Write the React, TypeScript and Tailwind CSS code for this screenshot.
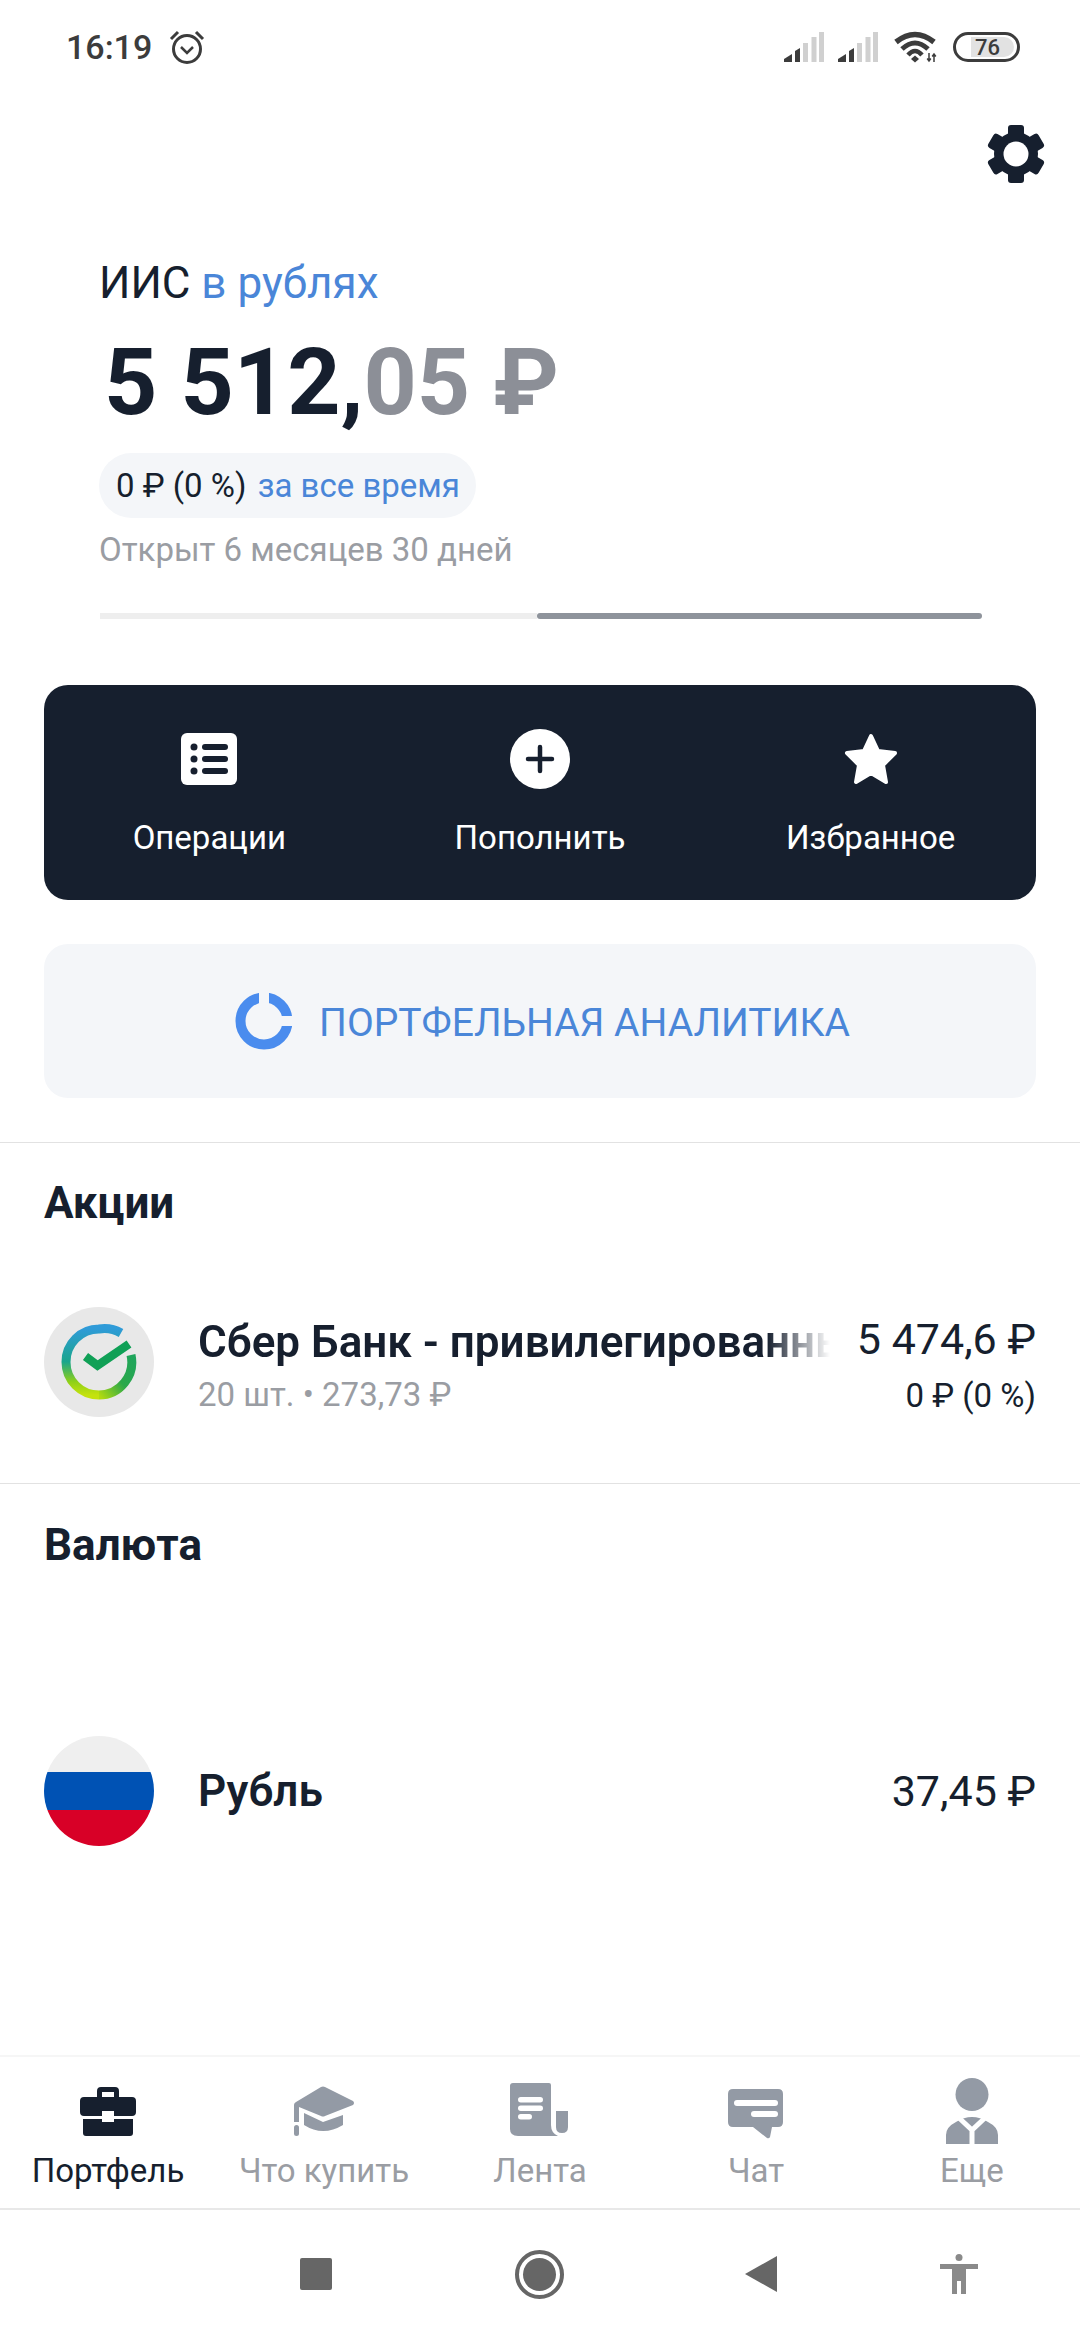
import React from 'react';

const FONT = { fontFamily: 'Roboto, "Liberation Sans", sans-serif' };

function SignalIcon() {
  return (
    <svg width="40" height="30" viewBox="0 0 40 30">
      <path d="M0 27 L8 22 V30 H0 Z" fill="#3c3c3c" />
      <path d="M11 19 L16 16 V30 H11 Z" fill="#3c3c3c" />
      <rect x="19" y="11" width="5" height="19" fill="#d0d0d0" />
      <rect x="27.5" y="5" width="5" height="25" fill="#d0d0d0" />
      <rect x="35" y="0" width="5" height="30" fill="#d0d0d0" />
    </svg>
  );
}

function WifiIcon() {
  return (
    <svg width="44" height="32" viewBox="0 0 44 32" fill="none">
      <path d="M2 11 Q21 -4 40 11" stroke="#3c3c3c" strokeWidth="5.5" />
      <path d="M8 18 Q21 6 34 18" stroke="#3c3c3c" strokeWidth="5" />
      <path d="M14 24 Q21 16 28 24" stroke="#3c3c3c" strokeWidth="4.5" />
      <path d="M21 24.5 L25 28 L21 31.5 L17 28 Z" fill="#3c3c3c" />
      <path d="M35 22 V30 M33.2 27.5 L35 30 L36.8 27.5" stroke="#3c3c3c" strokeWidth="1.5" />
      <path d="M40 31 V23 M38.2 25.5 L40 23 L41.8 25.5" stroke="#3c3c3c" strokeWidth="1.5" />
    </svg>
  );
}

function GearIcon() {
  return (
    <svg width="58" height="58" viewBox="0 0 58 58" fill="#161f2e">
      <circle cx="29" cy="29" r="22" />
      <rect x="21" y="0" width="16" height="58" rx="3" />
      <rect x="21" y="0" width="16" height="58" rx="3" transform="rotate(60 29 29)" />
      <rect x="21" y="0" width="16" height="58" rx="3" transform="rotate(120 29 29)" />
      <circle cx="29" cy="29" r="12.5" fill="#ffffff" />
    </svg>
  );
}

function ListIcon() {
  return (
    <svg width="56" height="52" viewBox="0 0 56 52">
      <rect width="56" height="52" rx="6" fill="#ffffff" />
      <circle cx="13" cy="14" r="3.5" fill="#161f2e" />
      <circle cx="13" cy="26" r="3.5" fill="#161f2e" />
      <circle cx="13" cy="38" r="3.5" fill="#161f2e" />
      <rect x="21" y="11" width="26" height="6" rx="3" fill="#161f2e" />
      <rect x="21" y="23" width="26" height="6" rx="3" fill="#161f2e" />
      <rect x="21" y="35" width="26" height="6" rx="3" fill="#161f2e" />
    </svg>
  );
}

function PlusIcon() {
  return (
    <svg width="60" height="60" viewBox="0 0 60 60">
      <circle cx="30" cy="30" r="30" fill="#ffffff" />
      <path d="M30 18 V42 M18 30 H42" stroke="#161f2e" strokeWidth="4.5" strokeLinecap="round" />
    </svg>
  );
}

function StarIcon() {
  return (
    <svg width="56" height="52" viewBox="0 0 56 52">
      <path
        d="M28 3 L35 18 L52 20 L40 32 L43 49 L28 40 L13 49 L16 32 L4 20 L21 18 Z"
        fill="#ffffff"
        stroke="#ffffff"
        strokeWidth="4"
        strokeLinejoin="round"
      />
    </svg>
  );
}

function DonutIcon() {
  return (
    <svg width="58" height="58" viewBox="0 0 58 58" fill="none">
      <circle cx="29" cy="29" r="23.5" stroke="#4a8cee" strokeWidth="10" />
      <rect x="24" y="0" width="10" height="18" fill="#f4f6f9" />
      <rect x="42" y="24" width="16" height="10" fill="#f4f6f9" />
    </svg>
  );
}

function SberIcon() {
  return (
    <div className="flex h-[110px] w-[110px] shrink-0 items-center justify-center rounded-full bg-[#e8e8e8]">
      <svg width="76" height="76" viewBox="0 0 76 76" fill="none">
        <defs>
          <linearGradient id="sber-left" x1="0" y1="0" x2="0" y2="1">
            <stop offset="0" stopColor="#2f9bd8" />
            <stop offset="0.5" stopColor="#19a58c" />
            <stop offset="0.8" stopColor="#8fd018" />
            <stop offset="1" stopColor="#c4e20e" />
          </linearGradient>
          <linearGradient id="sber-right" x1="0" y1="1" x2="1" y2="0">
            <stop offset="0" stopColor="#b0da10" />
            <stop offset="0.5" stopColor="#2ba84a" />
            <stop offset="1" stopColor="#1fa55c" />
          </linearGradient>
        </defs>
        <path d="M60 9 A33 33 0 0 0 38 5 A33 33 0 0 0 38 71" stroke="url(#sber-left)" strokeWidth="9" />
        <path d="M38 71 A33 33 0 0 0 70 31" stroke="url(#sber-right)" strokeWidth="9" />
        <path d="M24.5 32.5 L36.5 41.5 L68 20" stroke="#10a056" strokeWidth="8.5" />
      </svg>
    </div>
  );
}

function FlagIcon() {
  return (
    <div className="flex h-[110px] w-[110px] shrink-0 flex-col overflow-hidden rounded-full">
      <div className="h-[36px] bg-[#efefef]" />
      <div className="h-[38px] bg-[#0052b4]" />
      <div className="h-[36px] bg-[#d80027]" />
    </div>
  );
}

function BriefcaseIcon() {
  return (
    <svg width="72" height="72" viewBox="0 0 72 72" fill="#161f2e">
      <path d="M25 23 V16 Q25 12 29 12 H43 Q47 12 47 16 V23 H42 V17 H30 V23 Z" />
      <path d="M12 22 H60 Q64 22 64 26 V37 Q64 41 60 41 H42 V36 H30 V41 H12 Q8 41 8 37 V26 Q8 22 12 22 Z" />
      <path d="M11 44 H30 V47 H42 V44 H61 V58 Q61 61 58 61 H14 Q11 61 11 58 Z" />
    </svg>
  );
}

function HatIcon() {
  return (
    <svg width="72" height="72" viewBox="0 0 72 72" fill="#939aa5">
      <path d="M33 12 Q35 11 37 12 L65 26 Q67 28 65 30 L37 41 Q35 42 33 41 L11 32 V47 H6 V30 Q6 28 8 27 Z" />
      <path d="M16 38 L35 47 L55 40 V50 Q35 62 16 50 Z" />
      <rect x="6" y="50" width="5" height="11" rx="2.5" />
    </svg>
  );
}

function FeedIcon() {
  return (
    <svg width="72" height="72" viewBox="0 0 72 72">
      <path d="M9 8 H45 Q47 8 47 10 V50 Q47 58 54 61 H14 Q6 61 6 54 V11 Q6 8 9 8 Z" fill="#939aa5" />
      <path d="M52 36 H64 V52 Q64 58 58 58 Q52 58 52 52 Z" fill="#939aa5" />
      <rect x="14" y="22" width="25" height="5.5" rx="2.75" fill="#ffffff" />
      <rect x="14" y="30.5" width="25" height="5.5" rx="2.75" fill="#ffffff" />
      <rect x="14" y="39" width="14" height="5.5" rx="2.75" fill="#ffffff" />
    </svg>
  );
}

function ChatIcon() {
  return (
    <svg width="72" height="72" viewBox="0 0 72 72">
      <path d="M13 14 H58 Q63 14 63 19 V47 Q63 52 58 52 H52 L50 62 Q49 64 47 63 L33 52 H13 Q8 52 8 47 V19 Q8 14 13 14 Z" fill="#939aa5" />
      <rect x="14" y="25" width="44" height="6" rx="3" fill="#ffffff" />
      <rect x="31" y="36" width="27" height="6" rx="3" fill="#ffffff" />
    </svg>
  );
}

function PersonIcon() {
  return (
    <svg width="72" height="72" viewBox="0 0 72 72" fill="none">
      <circle cx="36" cy="19.5" r="16.5" fill="#939aa5" />
      <path d="M10 69 V60 Q10 52 20 47 Q28 42 36 42 Q44 42 52 47 Q62 52 62 60 V69 Z" fill="#939aa5" />
      <path d="M21 41 L36 55 L51 41 M36 55 V69" stroke="#ffffff" strokeWidth="5" />
    </svg>
  );
}

const NAV_ITEMS = [
  { label: 'Портфель', icon: <BriefcaseIcon />, active: true },
  { label: 'Что купить', icon: <HatIcon />, active: false },
  { label: 'Лента', icon: <FeedIcon />, active: false },
  { label: 'Чат', icon: <ChatIcon />, active: false },
  { label: 'Еще', icon: <PersonIcon />, active: false },
];

export default function App() {
  return (
    <div className="flex h-[2340px] w-[1080px] flex-col overflow-hidden bg-white text-[#161f2e]" style={FONT}>
      {/* status bar */}
      <div className="flex h-[94px] shrink-0 items-center justify-between pl-[66px] pr-[60px] text-[#3c3c3c]">
        <div className="flex items-center gap-[17px]">
          <span className="text-[34px] font-medium leading-none">16:19</span>
          <svg width="36" height="34" viewBox="0 0 36 34" fill="none" stroke="#3c3c3c">
            <circle cx="18" cy="19" r="13.5" strokeWidth="3" />
            <path d="M12 17 L18 23 L24 17" strokeWidth="2.5" />
            <path d="M2 9 L9 2 M34 9 L27 2" strokeWidth="3" />
          </svg>
        </div>
        <div className="flex items-center">
          <SignalIcon />
          <div className="ml-[14px]">
            <SignalIcon />
          </div>
          <div className="ml-[16px]">
            <WifiIcon />
          </div>
          <div className="ml-[15px] flex h-[30px] w-[67px] items-center rounded-full border-[3px] border-[#3c3c3c] py-[2px] pr-[3px]">
            <div className="ml-[15px] h-full w-[43px] rounded-r-full bg-[#e2e2e2] pl-[4px] text-[22px] font-medium leading-[22px] text-[#3c3c3c]">
              76
            </div>
          </div>
        </div>
      </div>

      {/* settings */}
      <div className="flex shrink-0 justify-end pb-[7px] pr-[35px] pt-[31px]">
        <GearIcon />
      </div>

      {/* account summary */}
      <div className="mt-[65px] flex shrink-0 flex-col items-start px-[99px]">
        <div className="text-[44px] leading-[56px]">
          ИИС <span className="text-[#4a86d8]">в рублях</span>
        </div>
        <div className="ml-[5px] mt-[17px] text-[93px] font-bold leading-[110px]">
          5 512,<span className="text-[#8c8f97]">05 ₽</span>
        </div>
        <div className="mt-[15px] flex h-[65px] items-center rounded-full bg-[#f4f6f9] pl-[17px] pr-[16px] text-[33px]">
          0 ₽ (0 %)&nbsp;<span className="ml-[3px] text-[#4a86d8]">за все время</span>
        </div>
        <div className="mt-[10px] text-[33px] leading-[44px] text-[#9a9da3]">Открыт 6 месяцев 30 дней</div>
        <div className="ml-px mt-[41px] flex h-[6px] w-[882px]">
          <div className="w-[437px] bg-[#eeeeee]" />
          <div className="flex-1 rounded-full bg-[#8e939b]" />
        </div>
      </div>

      {/* actions */}
      <div className="mx-[44px] mt-[66px] grid h-[215px] shrink-0 grid-cols-3 rounded-[24px] bg-[#161f2e] text-white">
        <div className="flex flex-col items-center pt-[48px]">
          <ListIcon />
          <div className="mt-[33px] text-[33px] leading-[40px]">Операции</div>
        </div>
        <div className="flex flex-col items-center pt-[44px]">
          <PlusIcon />
          <div className="mt-[29px] text-[33px] leading-[40px]">Пополнить</div>
        </div>
        <div className="flex flex-col items-center pt-[48px]">
          <StarIcon />
          <div className="mt-[33px] text-[33px] leading-[40px]">Избранное</div>
        </div>
      </div>

      <div className="mx-[44px] mt-[44px] flex h-[154px] shrink-0 items-center justify-center gap-[26px] rounded-[24px] bg-[#f4f6f9] pl-[5px]">
        <DonutIcon />
        <span className="pt-[4px] text-[39px] text-[#4a86d8]">ПОРТФЕЛЬНАЯ АНАЛИТИКА</span>
      </div>

      <div className="mt-[44px] h-px shrink-0 bg-[#e2e2e2]" />

      {/* stocks */}
      <div className="mt-[30px] shrink-0 px-[44px] text-[44px] font-bold leading-[60px]">Акции</div>
      <div className="mt-[74px] flex h-[110px] shrink-0 items-center px-[44px]">
        <SberIcon />
        <div className="ml-[44px] w-[632px] shrink-0 pt-[7px]">
          <div className="overflow-hidden whitespace-nowrap text-[44px] font-semibold leading-[52px] [mask-image:linear-gradient(90deg,#000_90%,transparent_100%)]">
            Сбер Банк - привилегированные акции
          </div>
          <div className="mt-[7px] text-[33px] leading-[40px] text-[#9a9da3]">20 шт. • 273,73 ₽</div>
        </div>
        <div className="ml-auto shrink-0 pt-[4px] text-right">
          <div className="text-[43px] leading-[52px]">5 474,6 ₽</div>
          <div className="mt-[11px] text-[33px] leading-[40px]">0 ₽ (0 %)</div>
        </div>
      </div>

      <div className="mt-[66px] h-px shrink-0 bg-[#e2e2e2]" />

      {/* currency */}
      <div className="mt-[31px] shrink-0 px-[44px] text-[44px] font-bold leading-[60px]">Валюта</div>
      <div className="mt-[161px] flex h-[110px] shrink-0 items-center px-[44px]">
        <FlagIcon />
        <div className="ml-[44px] flex-1 text-[44px] font-semibold">Рубль</div>
        <div className="text-[43px]">37,45 ₽</div>
      </div>

      {/* bottom tabs */}
      <div className="mt-auto grid h-[155px] shrink-0 grid-cols-5 border-b-2 border-t-2 border-b-[#e8e8e8] border-t-[#f6f6f6] pt-[18px]">
        {NAV_ITEMS.map((item) => (
          <div key={item.label} className="flex flex-col items-center">
            {item.icon}
            <div className={`mt-[2px] text-[33px] leading-[44px] ${item.active ? 'text-[#161f2e]' : 'text-[#9a9da3]'}`}>
              {item.label}
            </div>
          </div>
        ))}
      </div>

      {/* system navigation */}
      <div className="flex h-[130px] shrink-0 items-center pb-[2px] pl-[300px]">
        <div className="h-[32px] w-[32px] rounded-[2px] bg-[#666666]" />
        <div className="ml-[183px] flex h-[49px] w-[49px] items-center justify-center rounded-full border-[4px] border-[#666666]">
          <div className="h-[33px] w-[33px] rounded-full bg-[#666666]" />
        </div>
        <svg className="ml-[181px]" width="32" height="36" viewBox="0 0 32 36">
          <path d="M32 0 V36 L0 18 Z" fill="#666666" />
        </svg>
        <svg className="ml-[163px]" width="38" height="40" viewBox="0 0 38 40" fill="#8a8a8a">
          <circle cx="19" cy="3.5" r="3.5" />
          <path d="M0 10 H38 V15 H26 V40 H21 V27 H17 V40 H12 V15 H0 Z" />
        </svg>
      </div>
    </div>
  );
}
